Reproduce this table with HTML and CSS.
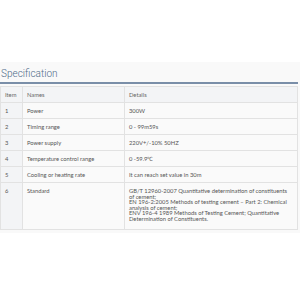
FILE: index.html
```html
<!DOCTYPE html>
<html>
<head>
<meta charset="utf-8">
<link rel="stylesheet" href="styles.css">
</head>
<body>
<section class="spec">
  <h2 class="spec-title">Specification</h2>
  <table class="spec-table">
    <thead>
      <tr><th class="c-item">Item</th><th class="c-name">Names</th><th class="c-det">Details</th></tr>
    </thead>
    <tbody>
      <tr><td class="c-item">1</td><td>Power</td><td>300W</td></tr>
      <tr><td class="c-item">2</td><td>Timing range</td><td>0 - 99m59s</td></tr>
      <tr><td class="c-item">3</td><td>Power supply</td><td>220V+/-10% 50HZ</td></tr>
      <tr><td class="c-item">4</td><td>Temperature control range</td><td>0 -59.9℃</td></tr>
      <tr><td class="c-item">5</td><td>Cooling or heating rate</td><td>It can reach set value in 30m</td></tr>
      <tr class="tall"><td class="c-item">6</td><td>Standard</td><td>GB/T 12960-2007 Quantitative determination of constituents of cement;<br>EN 196-2:2005 Methods of testing cement – Part 2: Chemical analysis of cement;<br>ENV 196-4 1989 Methods of Testing Cement; Quantitative Determination of Constituents.</td></tr>
    </tbody>
  </table>
</section>
</body>
</html>
```
FILE: styles.css
```css
html, body { margin: 0; padding: 0; background: #ffffff; }
body { padding-top: 62px; }
.spec {
  background: #f9f9f9;
  padding: 5px 2px 3px 0;
  font-family: "Lato", "Open Sans", sans-serif;
}
.spec-title {
  margin: 0;
  padding: 0 0 2px 1px;
  font-family: "Roboto", "Liberation Sans", sans-serif;
  font-weight: 300;
  font-size: 10px;
  line-height: 13px;
  color: #4d6a88;
  border-bottom: 2px solid #7a8ea8;
}
.spec-table {
  width: 100%;
  margin-top: 2px;
  border-collapse: collapse;
  font-size: 5.8px;
  color: #555;
  background: #fafafa;
}
.spec-table th, .spec-table td {
  border: 1px solid #e2e2e2;
  padding: 5px 4px 4px 4px;
  text-align: left;
  vertical-align: top;
  line-height: 6px;
  font-weight: 400;
}
.spec-table thead th { background: #f3f4f6; color: #666; }
.spec-table .c-item { width: 13px; background: #f3f4f6; }
.spec-table .c-name { width: 93px; }
.spec-table tr.tall td { line-height: 5.5px; padding-bottom: 8px; }
```
